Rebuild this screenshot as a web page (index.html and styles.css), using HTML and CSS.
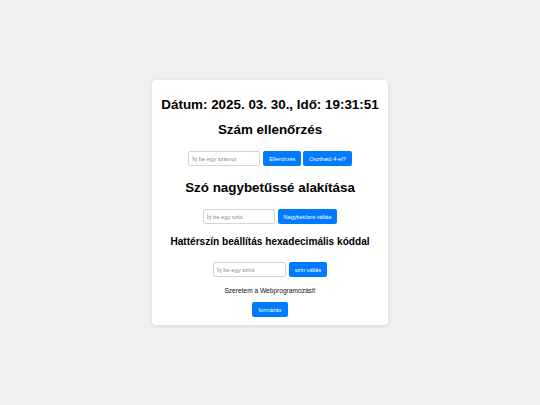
FILE: index.html
```html
<!DOCTYPE html>
<html lang="hu">
<head>
<meta charset="utf-8">
<title>Feladatok</title>
<link rel="stylesheet" href="styles.css">
</head>
<body>
<main class="card">
  <h1 class="title">Dátum: 2025. 03. 30., Idő: 19:31:51</h1>
  <h2 class="subtitle">Szám ellenőrzés</h2>
  <div class="row row-1">
    <input class="field field-1" type="text" placeholder="Írj be egy számot">
    <button class="btn btn-check">Ellenőrzés</button>
    <button class="btn btn-div">Osztható 4-el?</button>
  </div>
  <h2 class="subtitle subtitle-2">Szó nagybetűssé alakítása</h2>
  <div class="row row-2">
    <input class="field field-2" type="text" placeholder="Írj be egy szót">
    <button class="btn btn-upper">Nagybetűsre váltás</button>
  </div>
  <h3 class="small-title">Hattérszín beállítás hexadecimális kóddal</h3>
  <div class="row row-3">
    <input class="field field-3" type="text" placeholder="Írj be egy színt">
    <button class="btn btn-color">szín váltás</button>
  </div>
  <p class="message">Szeretem a Webprogramozást!</p>
  <div class="row row-4">
    <button class="btn btn-format">formázás</button>
  </div>
</main>
</body>
</html>
```

FILE: styles.css
```css
html, body {
  margin: 0;
  padding: 0;
  height: 100%;
}
body {
  background: #f0f0f0;
  font-family: "Liberation Sans", Arial, sans-serif;
  display: flex;
  align-items: center;
  justify-content: center;
}
.card {
  width: 236px;
  box-sizing: border-box;
  background: #ffffff;
  border-radius: 4px;
  box-shadow: 0 1px 4px rgba(0, 0, 0, 0.1);
  padding: 8px 6px 8px;
  text-align: center;
  display: flex;
  flex-direction: column;
  align-items: center;
  color: #000;
}
.title {
  font-size: 13.4px;
  line-height: 15px;
  margin: 8.5px 0 0;
  white-space: nowrap;
}
.subtitle {
  font-size: 13.4px;
  line-height: 15px;
  margin: 10px 0 0;
  white-space: nowrap;
}
.subtitle-2 {
  margin-top: 13.5px;
}
.small-title {
  font-size: 10.1px;
  line-height: 11.5px;
  margin: 12.25px 0 0;
  white-space: nowrap;
}
.row {
  display: flex;
  align-items: center;
  justify-content: center;
  gap: 2px;
  margin-top: 14.5px;
}
.row-3 {
  margin-top: 14.25px;
}
.row-4 {
  margin-top: 7.25px;
}
.field {
  width: 72px;
  height: 15px;
  box-sizing: border-box;
  border: 1px solid #d4d4d4;
  border-radius: 2px;
  padding: 0 3px;
  font-family: "Liberation Sans", Arial, sans-serif;
  font-size: 5.8px;
  margin-right: 1px;
  background: #fff;
}
.field::placeholder {
  color: #8a8a8a;
}
.field-3 {
  width: 73px;
}
.btn {
  height: 15px;
  box-sizing: border-box;
  border: none;
  border-radius: 2px;
  background: #007bff;
  color: #ffffff;
  font-family: "Liberation Sans", Arial, sans-serif;
  font-size: 5.6px;
  padding: 0 6px;
  cursor: pointer;
  white-space: nowrap;
}
.message {
  font-size: 6.6px;
  line-height: 7.5px;
  margin: 10.25px 0 0;
  color: #111;
}
```
